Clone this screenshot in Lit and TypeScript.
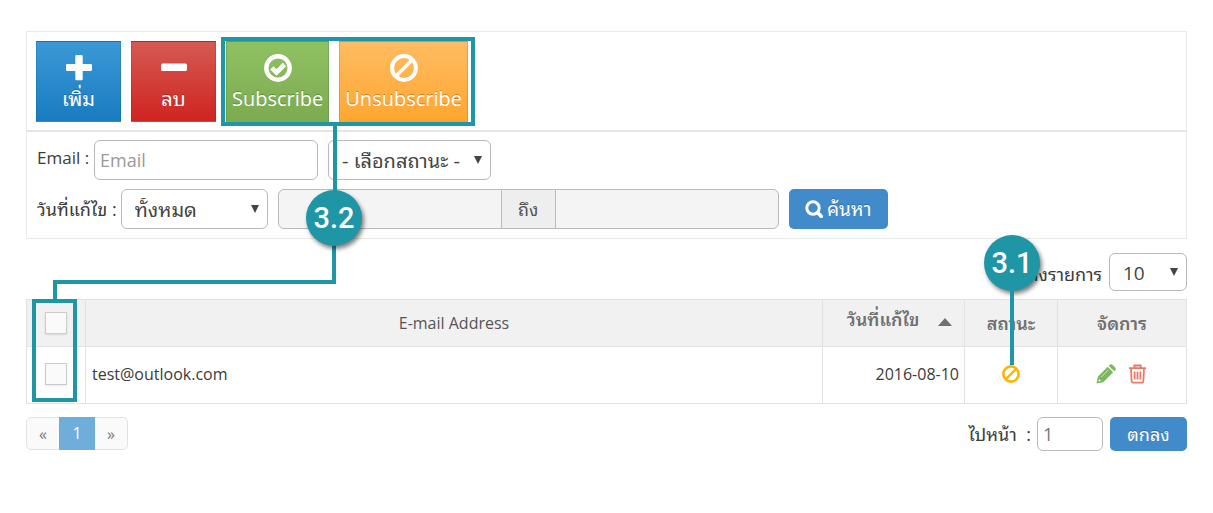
import { LitElement, html, css, svg } from "lit";
import { customElement, property } from "lit/decorators.js";

const icons = {
  plus: svg`<path d="M11.500 1h5q1.200 0 1.200 1.200v7.800h8q1.300 0 1.300 1.300v4.400q0 1.300-1.300 1.300h-8v8q0 1.200-1.200 1.200h-5q-1.200 0-1.200-1.200v-8H2.300q-1.300 0-1.300-1.300v-4.400q0-1.300 1.300-1.300h8V2.200q0-1.200 1.200-1.200z"/>`,
  minus: svg`<rect x="1" y="9.500" width="26" height="7.500" rx="1.500"/>`,
  check: svg`<circle cx="14" cy="14" r="11.700" fill="none" stroke="currentColor" stroke-width="4.400"/><path d="M7.800 13.800l4.700 4.700 8-8" fill="none" stroke="currentColor" stroke-width="4.600"/>`,
  ban: svg`<circle cx="14" cy="14" r="11.900" fill="none" stroke="currentColor" stroke-width="4"/><path d="M6 22L22 6" fill="none" stroke="currentColor" stroke-width="3.600"/>`,
  search: svg`<circle cx="8" cy="8" r="6.200" fill="none" stroke="currentColor" stroke-width="3"/><path d="M12.500 12.500l5 5" stroke="currentColor" stroke-width="3.600"/>`,
  caret: svg`<path d="M0 0h8L4 8z"/>`,
  sort: svg`<path d="M0 8L7 0l7 8z"/>`,
  pencil: svg`<path d="M.5 19.500l1.300-6.800L11.700 2.800l5.500 5.500-9.900 9.900zM12.700 1.800l1-1q1.400-1.200 2.700 0l2.800 2.800q1.200 1.300 0 2.700l-1 1z"/><path d="M5 13.200l7.500-7.500" stroke="#fff" stroke-width=".6" fill="none"/><circle cx="3.500" cy="16.500" r="1" fill="#fff"/>`,
  trash: svg`<path d="M0 4.200h17M5.300 4V1.500h6.400V4M2 4.500l.6 12.500q.1 1.700 1.700 1.700h8.400q1.600 0 1.700-1.700L15 4.500M5.600 7.500v8M8.500 7.500v8M11.400 7.500v8" fill="none" stroke="currentColor" stroke-width="1.800"/>`,
};

@customElement("select-box")
class SelectBox extends LitElement {
  @property({ attribute: false }) options: string[] = [];
  @property() label = "";
  static styles = css`
    :host { display: inline-grid; align-items: center; box-sizing: border-box; }
    select, svg { grid-area: 1 / 1; }
    select {
      appearance: none; width: 100%; height: 100%; box-sizing: border-box; margin: 0;
      padding: 2px 28px 0 13px; border: 1px solid #b9b9be; border-radius: 6px;
      background: #fff; color: #444; font: inherit;
    }
    svg { justify-self: end; margin-right: 9px; width: 8px; height: 8px; fill: #444; pointer-events: none; z-index: 1; }
  `;
  render() {
    return html`<select aria-label=${this.label}>${this.options.map((o) => html`<option>${o}</option>`)}</select>
      <svg viewBox="0 0 8 8" aria-hidden="true">${icons.caret}</svg>`;
  }
}

@customElement("app-root")
class AppRoot extends LitElement {
  static styles = css`
    :host {
      display: block; position: relative; box-sizing: border-box; padding: 31px 26px 62px;
      background: #fff; color: #3b3b3b;
      font: 16px/24px "Open Sans", "Noto Sans Thai Looped", "Loma", "Waree", "Noto Sans Thai", "Noto Sans", sans-serif;
    }
    *, *::before { box-sizing: border-box; }
    button, input { font: inherit; margin: 0; }
    .th { font-size: 18px; }
    .panel { border: 1px solid #e8eaea; }
    .toolbar { display: flex; gap: 10px; padding: 9px 9px 8px; border-bottom: 2px solid #e4e7e7; }
    .tool {
      display: flex; flex-direction: column; align-items: center; gap: 2px; height: 81px;
      padding: 12px 5px 0; border: 1px solid rgba(0, 60, 60, .15); color: #fff; font-size: 20px; line-height: 30px;
      text-shadow: 0 -1px 0 rgba(0, 0, 0, .25);
    }
    .tool svg { flex: none; width: 28px; height: 28px; fill: #fff; }
    .thai { width: 85px; }
    .add { background: linear-gradient(#3b98d6, #197cc1); }
    .remove { background: linear-gradient(#d55a52, #d02420); }
    .sub { background: linear-gradient(#8fc162, #7dab50); }
    .unsub { background: linear-gradient(#ffbc62, #ffa630); }
    .filters { display: flex; flex-direction: column; gap: 9px; padding: 8px 10px 9px; }
    .line { display: flex; align-items: center; }
    .line label { margin: 0 5px 4px 0; }
    .line .th { margin: 0 4px 0 0; }
    .latin { font-size: 17px; }
    .field {
      width: 224px; height: 40px; padding: 0 5px; border: 1px solid #b9b9be; border-radius: 6px;
      background: #fff; color: #777; font-size: 18px;
    }
    .field::placeholder { color: #999; opacity: 1; }
    .status { width: 163px; height: 40px; margin-left: 10px; font-size: 20px; }
    .period { width: 147px; height: 40px; font-size: 20px; }
    .range { display: flex; margin: 0 10px; }
    .range .field { background: #f4f4f4; }
    .range .from { border-radius: 6px 0 0 6px; }
    .range .until { border-radius: 0 6px 6px 0; }
    .to {
      width: 53px; font-size: 18px; line-height: 38px; text-align: center; border: solid #b9b9be; border-width: 1px 0;
      background: #eee; color: #555;
    }
    .primary {
      display: flex; align-items: center; justify-content: center; gap: 4px; border: 0; border-radius: 5px;
      background: #428bca; color: #fff; font-size: 18px; text-shadow: 0 -1px 0 rgba(0, 0, 0, .25);
    }
    .find { width: 99px; height: 40px; font-size: 19px; }
    .find svg { width: 18px; height: 18px; }
    .size { display: flex; justify-content: flex-end; align-items: center; gap: 7px; margin: 14px 0 8px; }
    .size label { padding-top: 4px; }
    .count { width: 78px; height: 38px; font-size: 19px; }
    table { width: 100%; border-collapse: collapse; table-layout: fixed; }
    th, td { border: 1px solid #dfe3e3; padding: 0 5px; }
    th { height: 47px; background: #f1f1f1; color: #555; font-weight: 500; }
    th.th { font-weight: 600; color: #707070; }
    th.sorted { padding: 0 0 8px 12px; }
    td { height: 57px; padding-bottom: 3px; }
    .c-check { width: 59px; } .c-date { width: 142px; } .c-status { width: 93px; } .c-manage { width: 129px; }
    .date { text-align: right; }
    .text { padding-left: 6px; }
    .sort { margin-left: 14px; width: 14px; height: 8px; fill: #707070; }
    .plain { padding: 0; border: 0; background: none; }
    .plain svg { display: block; width: 20px; height: 20px; }
    .blocked { color: #ffb400; }
    .plain.blocked svg { width: 18px; height: 18px; }
    .actions { display: flex; justify-content: center; gap: 12px; }
    .edit { fill: #7cb860; } .delete { color: #e8796b; }
    .tick {
      appearance: none; display: block; width: 22px; height: 22px; margin: 0 auto; background: #fafafa;
      border: 1px solid #ccc; box-shadow: 0 1px 2px rgba(0, 0, 0, .1);
    }
    .foot { display: flex; justify-content: space-between; margin-top: 13px; }
    .pager { display: flex; height: 33px; border: 1px solid #e2e2e2; border-radius: 5px; background: #fafafa; }
    .pager a { width: 32px; line-height: 32px; text-align: center; color: #777; text-decoration: none; }
    .pager .current { width: 36px; margin: -1px 0; background: #6faedb; color: #fff; }
    .jump { display: flex; align-items: center; }
    .field.page { width: 66px; height: 34px; margin: 0 7px 0 6px; }
    .ok { width: 77px; height: 34px; }
    .mark { position: absolute; pointer-events: none; background: #1f96a6; }
    .mark.box { background: none; border: 4px solid #1f96a6; }
    .badge {
      width: 56px; height: 56px; border-radius: 50%; color: #fff; text-align: center;
      font: 500 29px/56px Roboto, sans-serif; box-shadow: 2px 3px 4px rgba(0, 0, 0, .5);
    }
    .box-tools { left: 221px; top: 37px; width: 254px; height: 89px; }
    .box-ticks { left: 32px; top: 299px; width: 45px; height: 103px; }
    .stem-a { left: 333px; top: 124px; width: 4px; height: 70px; }
    .stem-b { left: 332px; top: 244px; width: 4px; height: 40px; }
    .stem-c { left: 53px; top: 280px; width: 283px; height: 4px; }
    .stem-d { left: 53px; top: 280px; width: 4px; height: 22px; }
    .stem-e { right: 199px; top: 288px; width: 4px; height: 77px; }
    .badge-a { left: 306px; top: 190px; }
    .badge-b { right: 173px; top: 235px; }
  `;

  private icon(name: keyof typeof icons, box = "0 0 28 28", cls = "") {
    return html`<svg class=${cls} viewBox=${box} aria-hidden="true">${icons[name]}</svg>`;
  }

  render() {
    return html`
      <section class="panel">
        <div class="toolbar">
          <button class="tool thai add">${this.icon("plus")}<span>เพิ่ม</span></button>
          <button class="tool thai remove">${this.icon("minus")}<span>ลบ</span></button>
          <button class="tool sub">${this.icon("check")}<span>Subscribe</span></button>
          <button class="tool unsub">${this.icon("ban")}<span>Unsubscribe</span></button>
        </div>
        <div class="filters">
          <div class="line">
            <label class="latin" for="email">Email :</label>
            <input class="field" id="email" placeholder="Email" />
            <select-box class="status" label="สถานะ" .options=${["- เลือกสถานะ -"]}></select-box>
          </div>
          <div class="line">
            <label class="th">วันที่แก้ไข :</label>
            <select-box class="period" label="วันที่แก้ไข" .options=${["ทั้งหมด"]}></select-box>
            <div class="range">
              <input class="field from" disabled aria-label="วันที่แก้ไข" />
              <span class="to">ถึง</span>
              <input class="field until" disabled aria-label="ถึง" />
            </div>
            <button class="primary find">${this.icon("search", "0 0 18 18")}ค้นหา</button>
          </div>
        </div>
      </section>
      <div class="size">
        <label class="th">แสดงรายการ</label>
        <select-box class="count" label="แสดงรายการ" .options=${["10"]}></select-box>
      </div>
      <table>
        <colgroup><col class="c-check" /><col /><col class="c-date" /><col class="c-status" /><col class="c-manage" /></colgroup>
        <thead>
          <tr>
            <th><input class="tick" type="checkbox" aria-label="E-mail Address" /></th>
            <th>E-mail Address</th>
            <th class="th sorted">วันที่แก้ไข ${this.icon("sort", "0 0 14 8", "sort")}</th>
            <th class="th">สถานะ</th>
            <th class="th">จัดการ</th>
          </tr>
        </thead>
        <tbody>
          <tr>
            <td><input class="tick" type="checkbox" aria-label="test@outlook.com" /></td>
            <td class="text">test@outlook.com</td>
            <td class="date">2016-08-10</td>
            <td><div class="actions">
              <button class="plain blocked" aria-label="Unsubscribe">${this.icon("ban")}</button>
            </div></td>
            <td><div class="actions">
              <button class="plain edit" aria-label="แก้ไข">${this.icon("pencil", "0 0 20 20")}</button>
              <button class="plain delete" aria-label="ลบ">${this.icon("trash", "-1 0 20 20")}</button>
            </div></td>
          </tr>
        </tbody>
      </table>
      <div class="foot">
        <nav class="pager"><a href="#">«</a><a class="current" href="#">1</a><a href="#">»</a></nav>
        <div class="jump">
          <label class="th" for="page">ไปหน้า&nbsp; :</label>
          <input class="field page" id="page" value="1" />
          <button class="primary ok">ตกลง</button>
        </div>
      </div>
      <div class="mark box box-tools"></div>
      <div class="mark box box-ticks"></div>
      <div class="mark stem-a"></div>
      <div class="mark stem-b"></div>
      <div class="mark stem-c"></div>
      <div class="mark stem-d"></div>
      <div class="mark badge badge-a">3.2</div>
      <div class="mark badge badge-b">3.1</div>
      <div class="mark stem-e"></div>
    `;
  }
}
